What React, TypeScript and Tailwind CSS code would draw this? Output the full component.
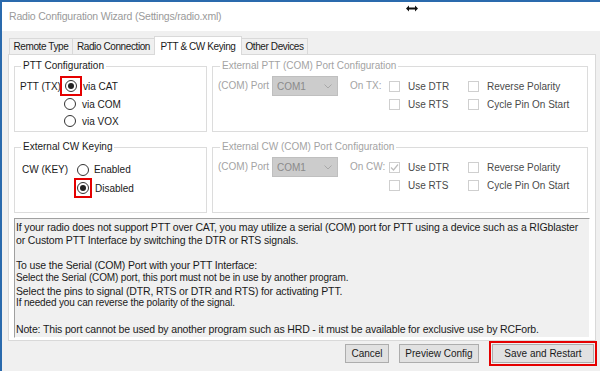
import * as React from "react"

function Radio({ checked }: { checked?: boolean }) {
    return (
        <span className="w-[12px] h-[12px] rounded-full border border-[#333] bg-white flex items-center justify-center shrink-0">
            {checked && <span className="w-[6px] h-[6px] rounded-full bg-[#222]" />}
        </span>
    )
}

function Check({ checked }: { checked?: boolean }) {
    return (
        <span className="w-[11px] h-[11px] border border-[#cfcfcf] bg-white flex items-center justify-center shrink-0">
            {checked && (
                <svg width="9" height="9" viewBox="0 0 9 9">
                    <path d="M1 4.5 L3.5 7 L8 1.5" fill="none" stroke="#bdbdbd" strokeWidth="1.2" />
                </svg>
            )}
        </span>
    )
}

function Combo() {
    return (
        <div className="w-[66px] h-[20px] bg-[#cccccc] border border-[#bfbfbf] flex items-center justify-between pl-[4px] pr-[5px] text-[#8a8a8a]">
            <span>COM1</span>
            <svg width="8" height="5" viewBox="0 0 8 5">
                <path d="M0.5 0.5 L4 4 L7.5 0.5" fill="none" stroke="#a8a8a8" strokeWidth="1" />
            </svg>
        </div>
    )
}

function PortGroup({ title, on, dtrChecked }: { title: string; on: string; dtrChecked?: boolean }) {
    return (
        <fieldset className="border border-[#dcdcdc] w-[376px] h-[72px] pl-[5px] text-[#a3a3a3]">
            <legend className="ml-[2px] px-[2px] leading-[12px]">{title}</legend>
            <div className="flex items-start">
                <span className="mt-[6px] w-[54px] leading-[15px]">(COM) Port</span>
                <div className="mt-[4px]"><Combo /></div>
                <span className="mt-[6px] ml-[12px] w-[39px] leading-[15px]">{on}</span>
                <div className="flex flex-col mt-[5px] w-[79px]">
                    <div className="flex items-center gap-[8px] h-[18px]"><Check checked={dtrChecked} /><span className="text-[#4a4a4a]">Use DTR</span></div>
                    <div className="flex items-center gap-[8px] h-[18px]"><Check /><span className="text-[#4a4a4a]">Use RTS</span></div>
                </div>
                <div className="flex flex-col mt-[5px]">
                    <div className="flex items-center gap-[8px] h-[18px]"><Check /><span className="text-[#4a4a4a]">Reverse Polarity</span></div>
                    <div className="flex items-center gap-[8px] h-[18px]"><Check /><span className="text-[#4a4a4a]">Cycle Pin On Start</span></div>
                </div>
            </div>
        </fieldset>
    )
}

export default function App() {
    const tabs = [
        { t: "Remote Type", w: "w-[64px]" },
        { t: "Radio Connection", w: "w-[83px]" },
        { t: "PTT & CW Keying", w: "w-[88px]" },
        { t: "Other Devices", w: "w-[67px]" },
    ]

    return (
        <div className="w-[600px] h-[371px] bg-[#f0f0f0] border-l-2 border-t-2 border-[#2a6aad] flex flex-col overflow-hidden text-[10px] whitespace-nowrap text-[#1a1a1a] font-['Liberation_Sans',Arial,sans-serif]">
            {/* title bar */}
            <div className="h-[29px] bg-white flex items-center pl-[7px] shrink-0 relative">
                <span className="text-[10.5px] text-[#9a9a9a] tracking-[-0.2px]">Radio Configuration Wizard (Settings/radio.xml)</span>
                <svg className="absolute left-[404px] top-[3px]" width="12" height="7" viewBox="0 0 12 7">
                    <path d="M0 3.5 L3 0.5 L3 2.5 L9 2.5 L9 0.5 L12 3.5 L9 6.5 L9 4.5 L3 4.5 L3 6.5 Z" fill="#111" />
                </svg>
            </div>

            {/* tabs */}
            <div className="flex items-end pl-[7px] mt-[4px] h-[19px] shrink-0 tracking-[-0.4px]">
                {tabs.map(({ t, w }) =>
                    t === "PTT & CW Keying" ? (
                        <div key={t} className={`${w} h-[19px] bg-white border border-b-0 border-[#d9d9d9] flex items-center justify-center -mb-px -ml-px relative z-10`}>{t}</div>
                    ) : (
                        <div key={t} className={`${w} h-[16px] border border-b-0 border-[#d9d9d9] flex items-center justify-center -ml-px first:ml-0`}>{t}</div>
                    )
                )}
            </div>

            {/* tab panel */}
            <div className="ml-[6px] w-[588px] h-[287px] bg-white border border-[#d9d9d9] shrink-0 pl-[5px] pt-[5px]">
                <div className="flex gap-[5px]">
                    <fieldset className="border border-[#dcdcdc] w-[193px] h-[72px] pl-[5px]">
                        <legend className="ml-[1px] px-[2px] leading-[12px]">PTT Configuration</legend>
                        <div className="flex mt-[4px]">
                            <span className="mt-[3px] w-[40px] leading-[15px]">PTT (TX)</span>
                            <div className="flex flex-col">
                                <div className="flex items-center">
                                    <span className="w-[22px] h-[20px] border-2 border-[#e50000] flex items-center justify-center"><Radio checked /></span>
                                    <span className="ml-[1px]">via CAT</span>
                                </div>
                                <div className="flex items-center h-[16px] ml-[4px]">
                                    <Radio /><span className="ml-[6px]">via COM</span>
                                </div>
                                <div className="flex items-center h-[16px] mt-[1px] ml-[4px]">
                                    <Radio /><span className="ml-[6px]">via VOX</span>
                                </div>
                            </div>
                        </div>
                    </fieldset>
                    <PortGroup title="External PTT (COM) Port Configuration" on="On TX:" />
                </div>

                <div className="flex gap-[5px] mt-[9px]">
                    <fieldset className="border border-[#dcdcdc] w-[193px] h-[72px] pl-[7px]">
                        <legend className="-ml-[1px] px-[2px] leading-[12px]">External CW Keying</legend>
                        <div className="flex mt-[8px]">
                            <span className="w-[52px] leading-[17px]">CW (KEY)</span>
                            <div className="flex flex-col">
                                <div className="flex items-center h-[17px] ml-[3px]">
                                    <Radio /><span className="ml-[5px]">Enabled</span>
                                </div>
                                <div className="flex items-center">
                                    <span className="w-[18px] h-[20px] border-2 border-[#e50000] flex items-center justify-center"><Radio checked /></span>
                                    <span className="ml-[3px]">Disabled</span>
                                </div>
                            </div>
                        </div>
                    </fieldset>
                    <PortGroup title="External CW (COM) Port Configuration" on="On CW:" dtrChecked />
                </div>

                <div className="mt-[5px] w-[576px] h-[120px] bg-[#f0f0f0] border border-t-[#a0a0a0] border-l-[#a0a0a0] border-r-white border-b-white px-[1px] pt-[2px] leading-[12.7px] text-[10.5px] tracking-[-0.15px]">
                    <div>If your radio does not support PTT over CAT, you may utilize a serial (COM) port for PTT using a device such as a RIGblaster</div>
                    <div>or Custom PTT Interface by switching the DTR or RTS signals.</div>
                    <div>&nbsp;</div>
                    <div>To use the Serial (COM) Port with your PTT Interface:</div>
                    <div className="text-[10px]">Select the Serial (COM) port, this port must not be in use by another program.</div>
                    <div>Select the pins to signal (DTR, RTS or DTR and RTS) for activating PTT.</div>
                    <div className="text-[10px]">If needed you can reverse the polarity of the signal.</div>
                    <div>&nbsp;</div>
                    <div>Note: This port cannot be used by another program such as HRD - it must be available for exclusive use by RCForb.</div>
                </div>
            </div>

            {/* buttons */}
            <div className="flex justify-end items-center gap-[10px] pr-[3px] h-[25px]">
                <button className="h-[19px] w-[44px] bg-[#e1e1e1] border border-[#adadad]">Cancel</button>
                <button className="h-[19px] w-[80px] bg-[#e1e1e1] border border-[#adadad]">Preview Config</button>
                <div className="border-2 border-[#e50000] p-px">
                    <button className="h-[19px] w-[102px] bg-[#e1e1e1] border border-[#adadad] block">Save and Restart</button>
                </div>
            </div>
        </div>
    )
}
